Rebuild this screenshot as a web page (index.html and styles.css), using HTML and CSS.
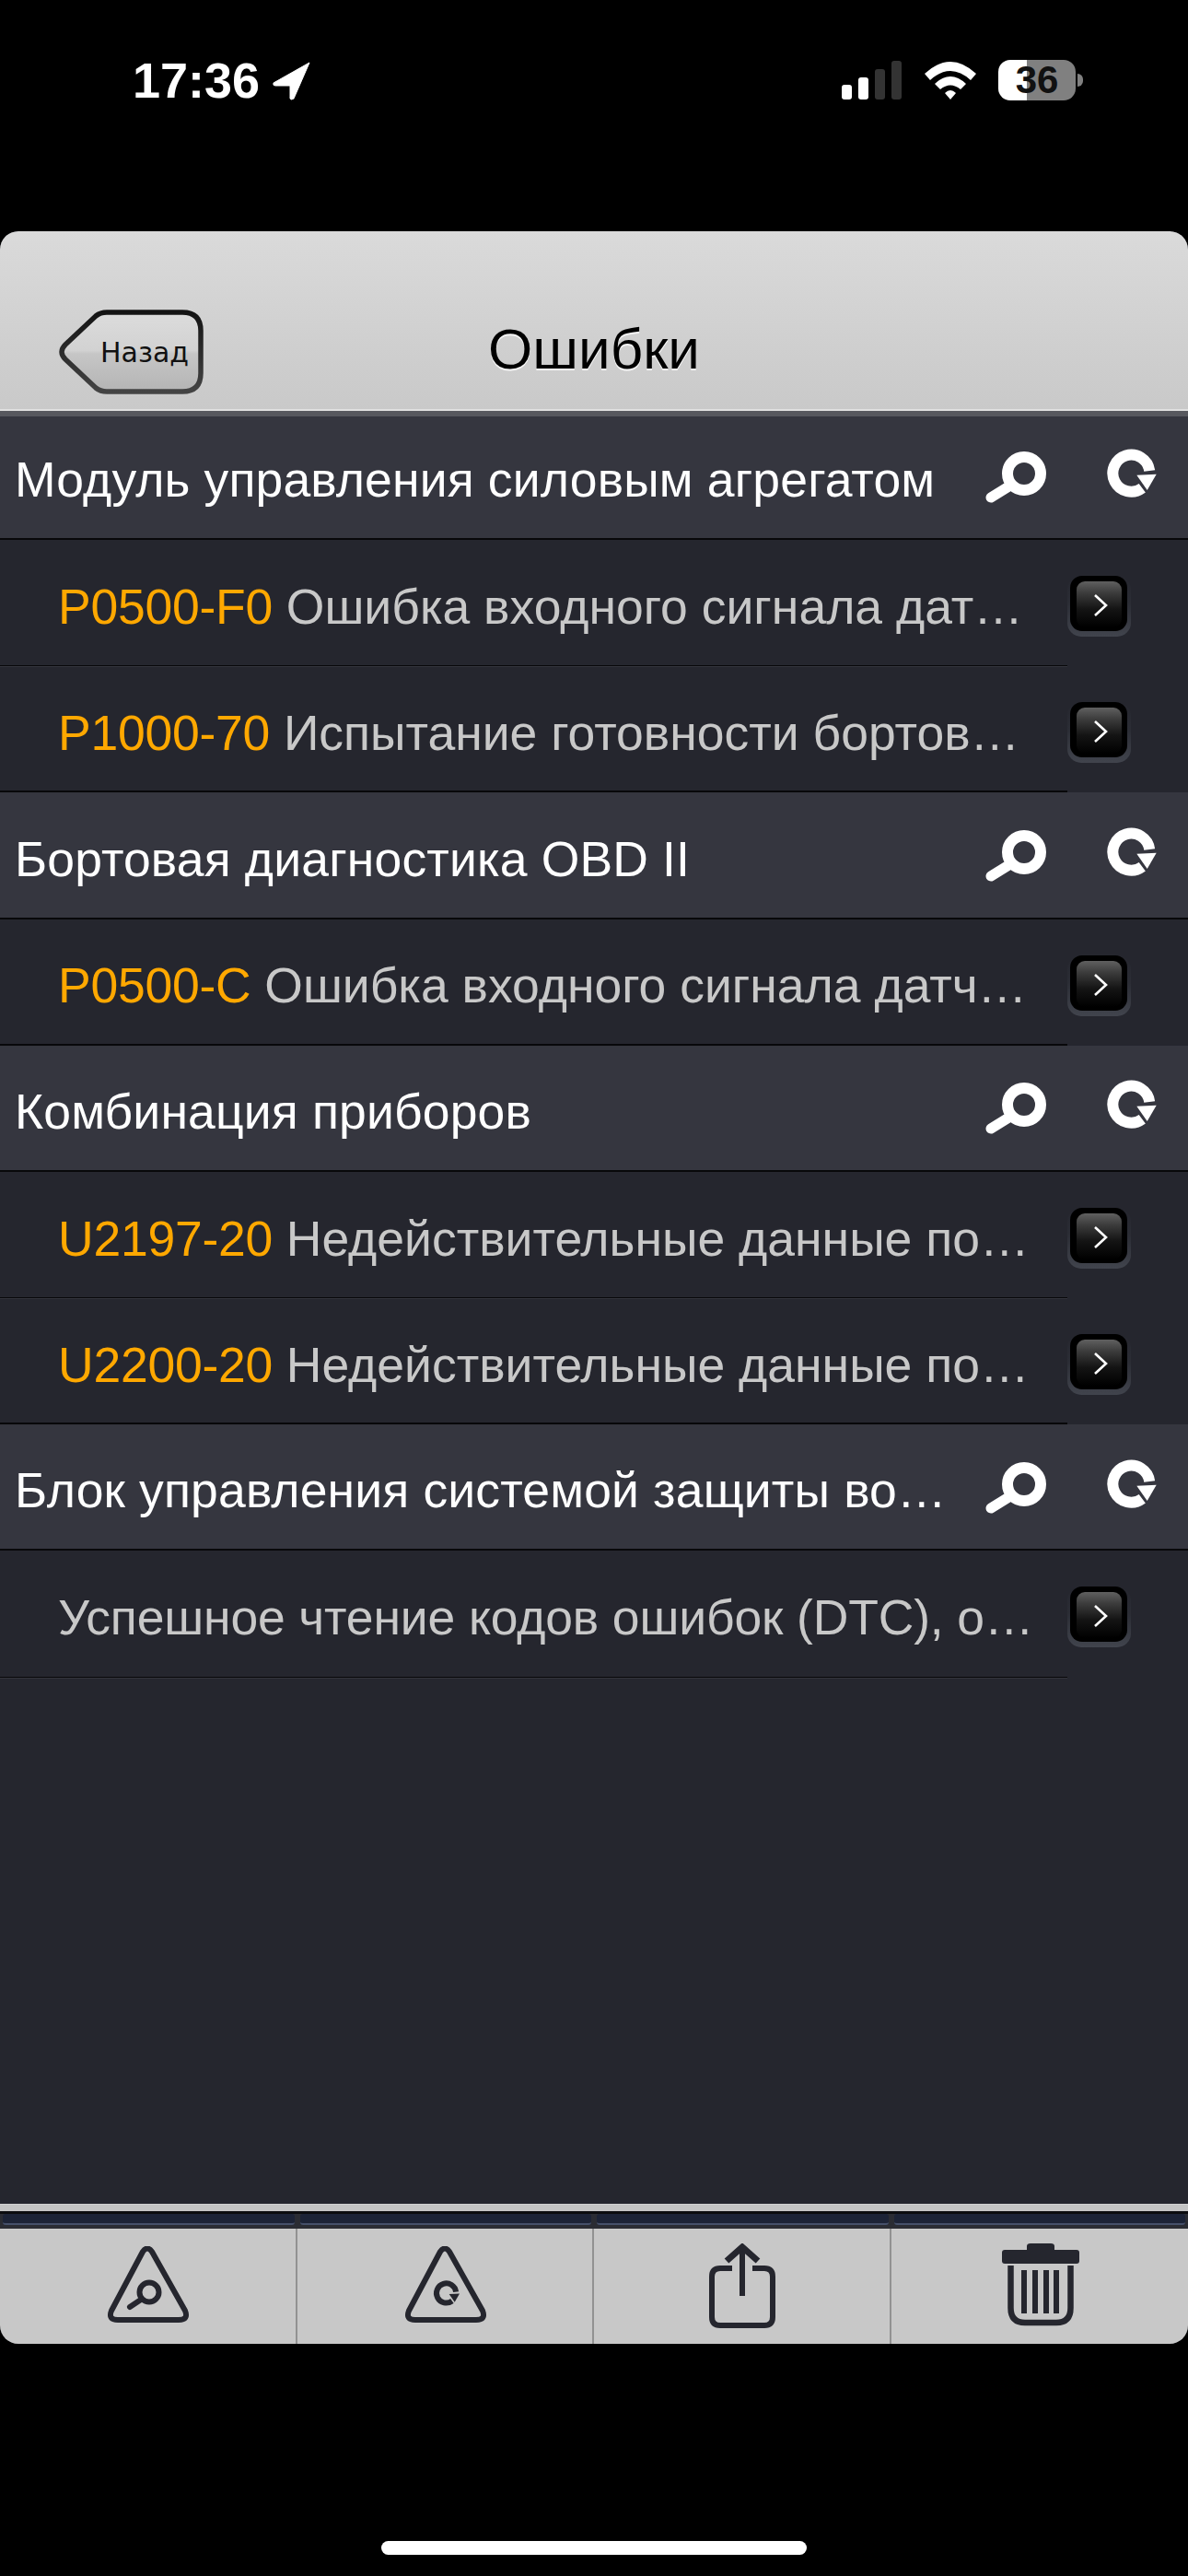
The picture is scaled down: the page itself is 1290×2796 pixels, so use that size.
FILE: index.html
```html
<!DOCTYPE html>
<html lang="ru">
<head>
<meta charset="utf-8">
<title>Ошибки</title>
<link rel="stylesheet" href="styles.css">
</head>
<body>
<div class="screen">
  <div class="status">
    <div class="status-left">
      <span class="time">17:36</span>
      <svg class="loc" width="42" height="42" viewBox="0 0 42 42"><path d="M40 1 L1 23 Q0 26 3 26 L19 26 L19 40 Q20 42 23 40 Z" fill="#fff" stroke="#fff" stroke-width="1" stroke-linejoin="round"/></svg>
    </div>
    <div class="status-right">
      <svg width="66" height="42" viewBox="0 0 66 42"><rect x="0" y="26" width="11" height="16" rx="3" fill="#fff"/><rect x="18" y="18" width="11" height="24" rx="3" fill="#fff"/><rect x="36" y="9" width="11" height="33" rx="3" fill="#333"/><rect x="54" y="0" width="11" height="42" rx="3" fill="#333"/></svg>
      <svg width="58" height="42" viewBox="0 0 58 42"><path d="M1 14 Q29 -12 57 14 L51 21 Q29 1 7 21 Z" fill="#fff"/><path d="M12 25 Q29 9 46 25 L40 31 Q29 22 18 31 Z" fill="#fff"/><path d="M23 35 Q29 29 35 35 L29 42 Z" fill="#fff"/></svg>
      <div class="battery"><span class="battery-num">36</span></div>
    </div>
  </div>
  <div class="app">
    <header class="nav">
      <div class="back">
        <svg class="back-shape" width="160" height="94" viewBox="0 0 160 94"><defs><linearGradient id="bg" x1="0" y1="0" x2="0" y2="1"><stop offset="0" stop-color="#dcdcdc"/><stop offset=".48" stop-color="#d2d2d2"/><stop offset=".52" stop-color="#c6c6c6"/><stop offset="1" stop-color="#b4b4b4"/></linearGradient><linearGradient id="bs" x1="0" y1="0" x2="0" y2="1"><stop offset="0" stop-color="#141414"/><stop offset="1" stop-color="#444"/></linearGradient></defs><path d="M5 47 Q5 43 9 39 L42 8 Q47 4 54 4 L136 4 Q156 4 156 24 L156 70 Q156 90 136 90 L54 90 Q47 90 42 86 L9 55 Q5 51 5 47 Z" fill="url(#bg)" stroke="url(#bs)" stroke-width="5.5"/></svg>
        <span class="back-label">Назад</span>
      </div>
      <h1 class="nav-title">Ошибки</h1>
    </header>
    <main class="list">
      <div class="section">
        <span class="section-title">Модуль управления силовым агрегатом</span>
        <svg class="ico" width="72" height="60" viewBox="0 0 72 60"><use href="#i-search"/></svg>
        <svg class="ico" width="62" height="60" viewBox="0 0 62 60"><use href="#i-refresh"/></svg>
      </div>
      <div class="row"><div class="row-text"><span class="code">P0500-F0</span> Ошибка входного сигнала дат…</div><div class="more"><span class="more-btn"><svg width="20" height="26" viewBox="0 0 20 26"><path d="M3 2 L15 13 L3 24" fill="none" stroke="#fff" stroke-width="2.6"/></svg></span></div></div>
      <div class="row row-last"><div class="row-text"><span class="code">P1000-70</span> Испытание готовности бортов…</div><div class="more"><span class="more-btn"><svg width="20" height="26" viewBox="0 0 20 26"><path d="M3 2 L15 13 L3 24" fill="none" stroke="#fff" stroke-width="2.6"/></svg></span></div></div>
      <div class="section">
        <span class="section-title">Бортовая диагностика OBD II</span>
        <svg class="ico" width="72" height="60" viewBox="0 0 72 60"><use href="#i-search"/></svg>
        <svg class="ico" width="62" height="60" viewBox="0 0 62 60"><use href="#i-refresh"/></svg>
      </div>
      <div class="row row-last"><div class="row-text"><span class="code">P0500-C</span> Ошибка входного сигнала датч…</div><div class="more"><span class="more-btn"><svg width="20" height="26" viewBox="0 0 20 26"><path d="M3 2 L15 13 L3 24" fill="none" stroke="#fff" stroke-width="2.6"/></svg></span></div></div>
      <div class="section">
        <span class="section-title">Комбинация приборов</span>
        <svg class="ico" width="72" height="60" viewBox="0 0 72 60"><use href="#i-search"/></svg>
        <svg class="ico" width="62" height="60" viewBox="0 0 62 60"><use href="#i-refresh"/></svg>
      </div>
      <div class="row"><div class="row-text"><span class="code">U2197-20</span> Недействительные данные по…</div><div class="more"><span class="more-btn"><svg width="20" height="26" viewBox="0 0 20 26"><path d="M3 2 L15 13 L3 24" fill="none" stroke="#fff" stroke-width="2.6"/></svg></span></div></div>
      <div class="row row-last"><div class="row-text"><span class="code">U2200-20</span> Недействительные данные по…</div><div class="more"><span class="more-btn"><svg width="20" height="26" viewBox="0 0 20 26"><path d="M3 2 L15 13 L3 24" fill="none" stroke="#fff" stroke-width="2.6"/></svg></span></div></div>
      <div class="section">
        <span class="section-title">Блок управления системой защиты во…</span>
        <svg class="ico" width="72" height="60" viewBox="0 0 72 60"><use href="#i-search"/></svg>
        <svg class="ico" width="62" height="60" viewBox="0 0 62 60"><use href="#i-refresh"/></svg>
      </div>
      <div class="row"><div class="row-text row-text-tight">Успешное чтение кодов ошибок (DTC), о…</div><div class="more"><span class="more-btn"><svg width="20" height="26" viewBox="0 0 20 26"><path d="M3 2 L15 13 L3 24" fill="none" stroke="#fff" stroke-width="2.6"/></svg></span></div></div>
    </main>
    <div class="strip"><span class="seg"></span><span class="seg"></span><span class="seg"></span><span class="seg"></span></div>
    <footer class="toolbar">
      <div class="tool">
        <svg width="90" height="84" viewBox="0 0 90 84" fill="none" stroke="#25262e"><path d="M39 6 Q44 -1 49 6 L85 70 Q89 80 78 80 L12 80 Q1 80 5 70 Z" stroke-width="6" stroke-linejoin="round"/><circle cx="46" cy="50" r="10.5" stroke-width="6"/><path d="M37 58 L25 66" stroke-width="6" stroke-linecap="round"/></svg>
      </div>
      <div class="tool">
        <svg width="90" height="84" viewBox="0 0 90 84" fill="none" stroke="#25262e"><path d="M39 6 Q44 -1 49 6 L85 70 Q89 80 78 80 L12 80 Q1 80 5 70 Z" stroke-width="6" stroke-linejoin="round"/><path d="M51.9 59.5 A10.6 10.6 0 1 1 56.1 49.6" stroke-width="6"/><path d="M48.7 52 L60 51.5 L54.7 60.7 Z" fill="#25262e" stroke="none"/></svg>
      </div>
      <div class="tool">
        <svg width="72" height="92" viewBox="0 0 72 92" fill="none" stroke="#25262e" stroke-width="6"><path d="M25 27 L12 27 Q3 27 3 36 L3 80 Q3 89 12 89 L60 89 Q69 89 69 80 L69 36 Q69 27 60 27 L47 27"/><path d="M36 57 L36 4"/><path d="M19 19 L36 4 L53 19" stroke-width="7"/></svg>
      </div>
      <div class="tool">
        <svg width="84" height="92" viewBox="0 0 84 92" fill="#25262e"><rect x="0" y="7" width="84" height="15" rx="3"/><path d="M27 8 L27 3 Q27 0 31 0 L53 0 Q57 0 57 3 L57 8 Z"/><path d="M9.5 24 L9.5 70 Q9.5 86 25 86 L59 86 Q74.5 86 74.5 70 L74.5 24" fill="none" stroke="#25262e" stroke-width="6.5"/><rect x="21" y="29" width="6" height="47"/><rect x="33" y="29" width="6" height="47"/><rect x="45" y="29" width="6" height="47"/><rect x="56" y="29" width="6" height="47"/></svg>
      </div>
    </footer>
  </div>
  <div class="home-area"><span class="home"></span></div>
</div>
<svg class="defs" width="0" height="0" aria-hidden="true">
  <defs>
    <g id="i-search" fill="none" stroke="#fff"><circle cx="46" cy="27" r="18" stroke-width="12"/><path d="M31 40 L10 53" stroke-width="11" stroke-linecap="round"/></g>
    <g id="i-refresh"><path d="M42.3 42.7 A20 20 0 1 1 50.2 24" fill="none" stroke="#fff" stroke-width="12"/><path d="M36.3 28.7 L57.7 27.7 L47.7 45 Z" fill="#fff"/></g>
  </defs>
</svg>
</body>
</html>
```
FILE: styles.css
```css
* { box-sizing: border-box; }
html, body { margin: 0; padding: 0; background: #000; }
body { font-family: "Liberation Sans", Arial, sans-serif; }
.screen { width: 1290px; height: 2796px; display: flex; flex-direction: column; background: #000; overflow: hidden; }
.defs { display: block; height: 0; }

.status { height: 251px; flex: none; display: flex; justify-content: space-between; align-items: flex-start; padding: 64px 122px 0 144px; color: #fff; }
.status-left { display: flex; align-items: flex-start; gap: 14px; }
.time { font-size: 54px; font-weight: 700; line-height: 47px; }
.loc { margin-top: 3px; }
.status-right { display: flex; align-items: flex-start; gap: 23px; padding-top: 1px; }
.status-right svg { margin-top: 1px; }
.battery { position: relative; width: 84px; height: 44px; border-radius: 13px; background: linear-gradient(90deg, #fff 0 31px, #808080 31px); display: flex; align-items: center; justify-content: center; }
.battery::after { content: ""; position: absolute; left: 86px; top: 15px; width: 6px; height: 14px; border-radius: 0 7px 7px 0; background: #808080; }
.battery-num { font-size: 42px; font-weight: 700; color: #111; }

.app { flex: none; height: 2293px; display: flex; flex-direction: column; border-radius: 20px; overflow: hidden; background: #25262e; }
.nav { flex: none; height: 198px; position: relative; display: flex; align-items: flex-end; justify-content: center; background: linear-gradient(180deg, #dadada 0, #c9c9c9 100%); border-bottom: 3px solid #57585e; box-shadow: inset 0 -2px 0 #e0e0e0; }
.nav-title { margin: 0 0 34px; font-size: 62px; font-weight: 400; line-height: 66px; color: #000; text-shadow: 0 2px 0 rgba(255,255,255,.8); }
.back { position: absolute; left: 62px; top: 84px; width: 160px; height: 94px; }
.back-shape { display: block; }
.back-label { position: absolute; left: 47px; top: 26px; font-family: "DejaVu Sans", sans-serif; font-size: 30px; line-height: 44px; color: #111; }

.list { flex: 1; min-height: 0; background: #25262e; }
.section { height: 137.17px; display: flex; align-items: center; background: #35363f; border-bottom: 2px solid #08080a; padding: 0 30px 0 16px; }
.section:first-child { box-shadow: inset 0 3px 0 #57585e; }
.section-title { flex: 1; min-width: 0; font-size: 53.5px; line-height: 60px; letter-spacing: .15px; padding-top: 9px; color: #fff; white-space: nowrap; }
.ico { flex: none; margin-left: 60px; }
.section-title + .ico { margin-left: 20px; }

.row { height: 137.17px; display: flex; background: #25262e; }
.row-text { width: 1159px; flex: none; display: flex; align-items: center; white-space: pre; padding: 9px 0 0 63px; font-size: 53.5px; color: #c8c8c8; border-bottom: 1px solid #08080a; box-shadow: 0 1px 0 #33343c; }
.row-text-tight { letter-spacing: -.15px; }
.row-last .row-text { border-bottom-width: 2px; }
.code { color: #ffa800; letter-spacing: -.25px; }
.more { flex: 1; display: flex; align-items: flex-start; padding-top: 39px; }
.more-btn { width: 69px; height: 66px; border-radius: 15px; background: linear-gradient(180deg, #25262e 0, #2b2d35 45%, #41444d 100%); display: block; position: relative; }
.more-btn::before { content: ""; position: absolute; left: 3px; top: 0; width: 62px; height: 60px; border-radius: 13px; background: #000; }
.more-btn::after { content: ""; position: absolute; left: 10px; top: 6px; width: 49px; height: 50px; border-radius: 9px; background: linear-gradient(180deg, #606060 0, #3c3c3c 25%, #141414 60%, #000 100%); }
.more-btn svg { position: absolute; z-index: 1; left: 27px; top: 19px; }

.strip { flex: none; height: 27px; display: grid; grid-template-columns: repeat(4, 1fr); background: linear-gradient(180deg, #d0d0d0 0 1px, #c4c4c4 1px 8px, #0c0d10 8px 11px, #2a2c33 11px); padding-top: 11px; }
.seg { height: 12px; margin: 0 3px; border-radius: 3px; background: #1c2336; border-bottom: 2px solid #45506a; }
.toolbar { flex: none; height: 125px; display: grid; grid-template-columns: repeat(4, 1fr); background: #c8c8c8; }
.tool { display: flex; align-items: flex-start; justify-content: center; border-right: 2px solid #929292; padding: 19px 0 0 2px; }
.tool:last-child { border-right: 0; }
.tool:nth-child(n+3) { padding-top: 16px; }

.home-area { flex: 1; display: flex; justify-content: center; align-items: flex-end; padding-bottom: 23px; }
.home { width: 462px; height: 15px; border-radius: 8px; background: #fff; }
```
